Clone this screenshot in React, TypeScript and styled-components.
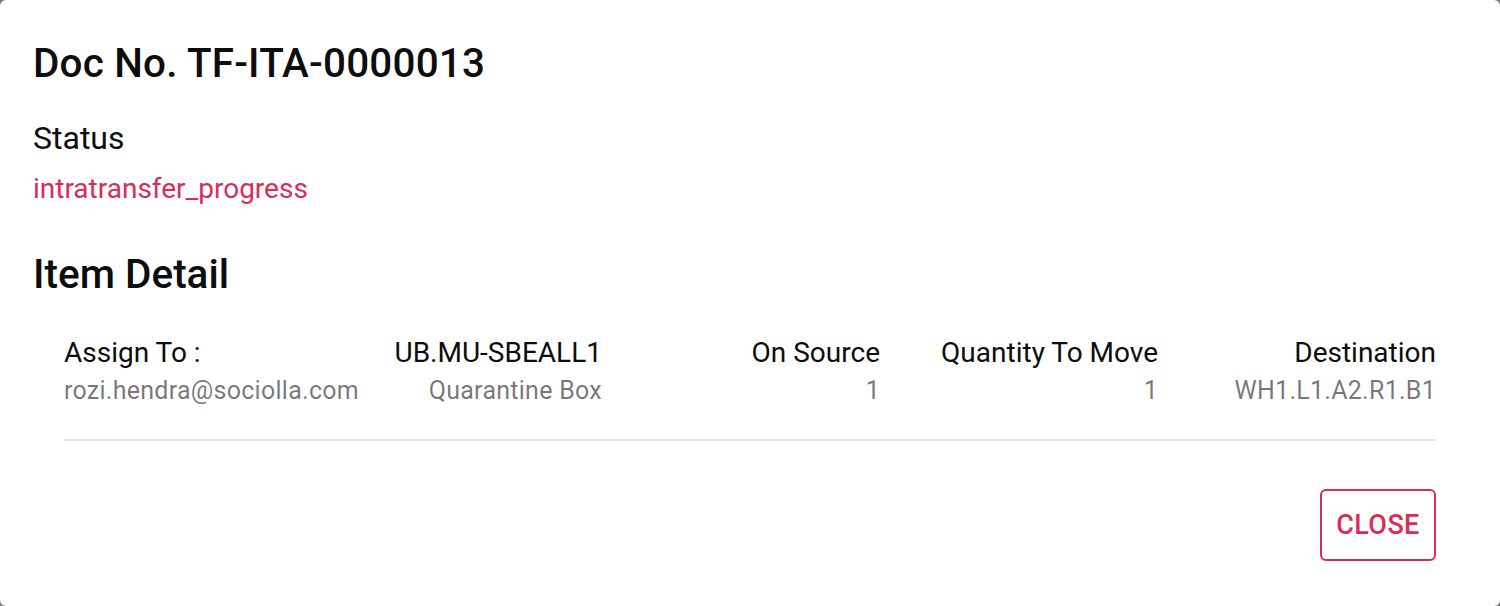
import React from "react";
import styled, { createGlobalStyle } from "styled-components";

const Global = createGlobalStyle`
  html, body { margin: 0; padding: 0; }
  body {
    background: #7a7a7a;
    font-family: Roboto, "Noto Sans", Arial, sans-serif;
    -webkit-font-smoothing: antialiased;
  }
`;

const ACCENT = "#d92d55";

const Paper = styled.div`
  box-sizing: border-box;
  width: 1500px;
  height: 606px;
  background: #fff;
  border-radius: 6px;
  padding: 40px 64px 0 33px;
  display: flex;
  flex-direction: column;
  color: #0d0d0d;
`;

const Title = styled.h2`
  margin: 0;
  font-size: 40.4px;
  line-height: 48px;
  font-weight: 500;
  letter-spacing: 0.2px;
`;

const Label = styled.div`
  margin-top: 31px;
  font-size: 32px;
  line-height: 38px;
  font-weight: 400;
`;

const StatusValue = styled.div`
  margin-top: 15px;
  font-size: 28px;
  line-height: 34px;
  color: ${ACCENT};
`;

const Section = styled.h3`
  margin: 44px 0 0;
  font-size: 40.5px;
  line-height: 48px;
  font-weight: 500;
`;

const Table = styled.div`
  margin: 38px 0 0 31px;
  display: grid;
  grid-template-columns: repeat(5, minmax(0, 1fr));
  column-gap: 18px;
  padding-bottom: 32px;
  border-bottom: 2px solid #e3e3e3;
`;

const Cell = styled.div<{ $align: "left" | "right" }>`
  display: flex;
  flex-direction: column;
  align-items: ${(p) => (p.$align === "left" ? "flex-start" : "flex-end")};
  text-align: ${(p) => p.$align};
  white-space: nowrap;
`;

const Head = styled.div`
  font-size: 28px;
  line-height: 34px;
  color: #0d0d0d;
`;

const Value = styled.div`
  margin-top: 5px;
  font-size: 25px;
  line-height: 32px;
  letter-spacing: 0.27px;
  color: rgba(0, 0, 0, 0.54);
`;

const Actions = styled.div`
  display: flex;
  justify-content: flex-end;
  margin-top: 48px;
`;

const CloseButton = styled.button`
  box-sizing: border-box;
  width: 116px;
  height: 72px;
  border: 2px solid ${ACCENT};
  border-radius: 6px;
  background: transparent;
  color: ${ACCENT};
  font-family: Roboto, "Noto Sans", Arial, sans-serif;
  font-size: 27px;
  font-weight: 500;
  letter-spacing: 0.4px;
  text-transform: uppercase;
  cursor: pointer;
  padding: 0;
`;

const columns: { head: string; value: string; align: "left" | "right" }[] = [
  { head: "Assign To :", value: "rozi.hendra@sociolla.com", align: "left" },
  { head: "UB.MU-SBEALL1", value: "Quarantine Box", align: "right" },
  { head: "On Source", value: "1", align: "right" },
  { head: "Quantity To Move", value: "1", align: "right" },
  { head: "Destination", value: "WH1.L1.A2.R1.B1", align: "right" },
];

export default function App() {
  return (
    <>
      <Global />
      <Paper>
        <Title>Doc No. TF-ITA-0000013</Title>
        <Label>Status</Label>
        <StatusValue>intratransfer_progress</StatusValue>
        <Section>Item Detail</Section>
        <Table>
          {columns.map((c) => (
            <Cell key={c.head} $align={c.align}>
              <Head>{c.head}</Head>
              <Value>{c.value}</Value>
            </Cell>
          ))}
        </Table>
        <Actions>
          <CloseButton>Close</CloseButton>
        </Actions>
      </Paper>
    </>
  );
}
